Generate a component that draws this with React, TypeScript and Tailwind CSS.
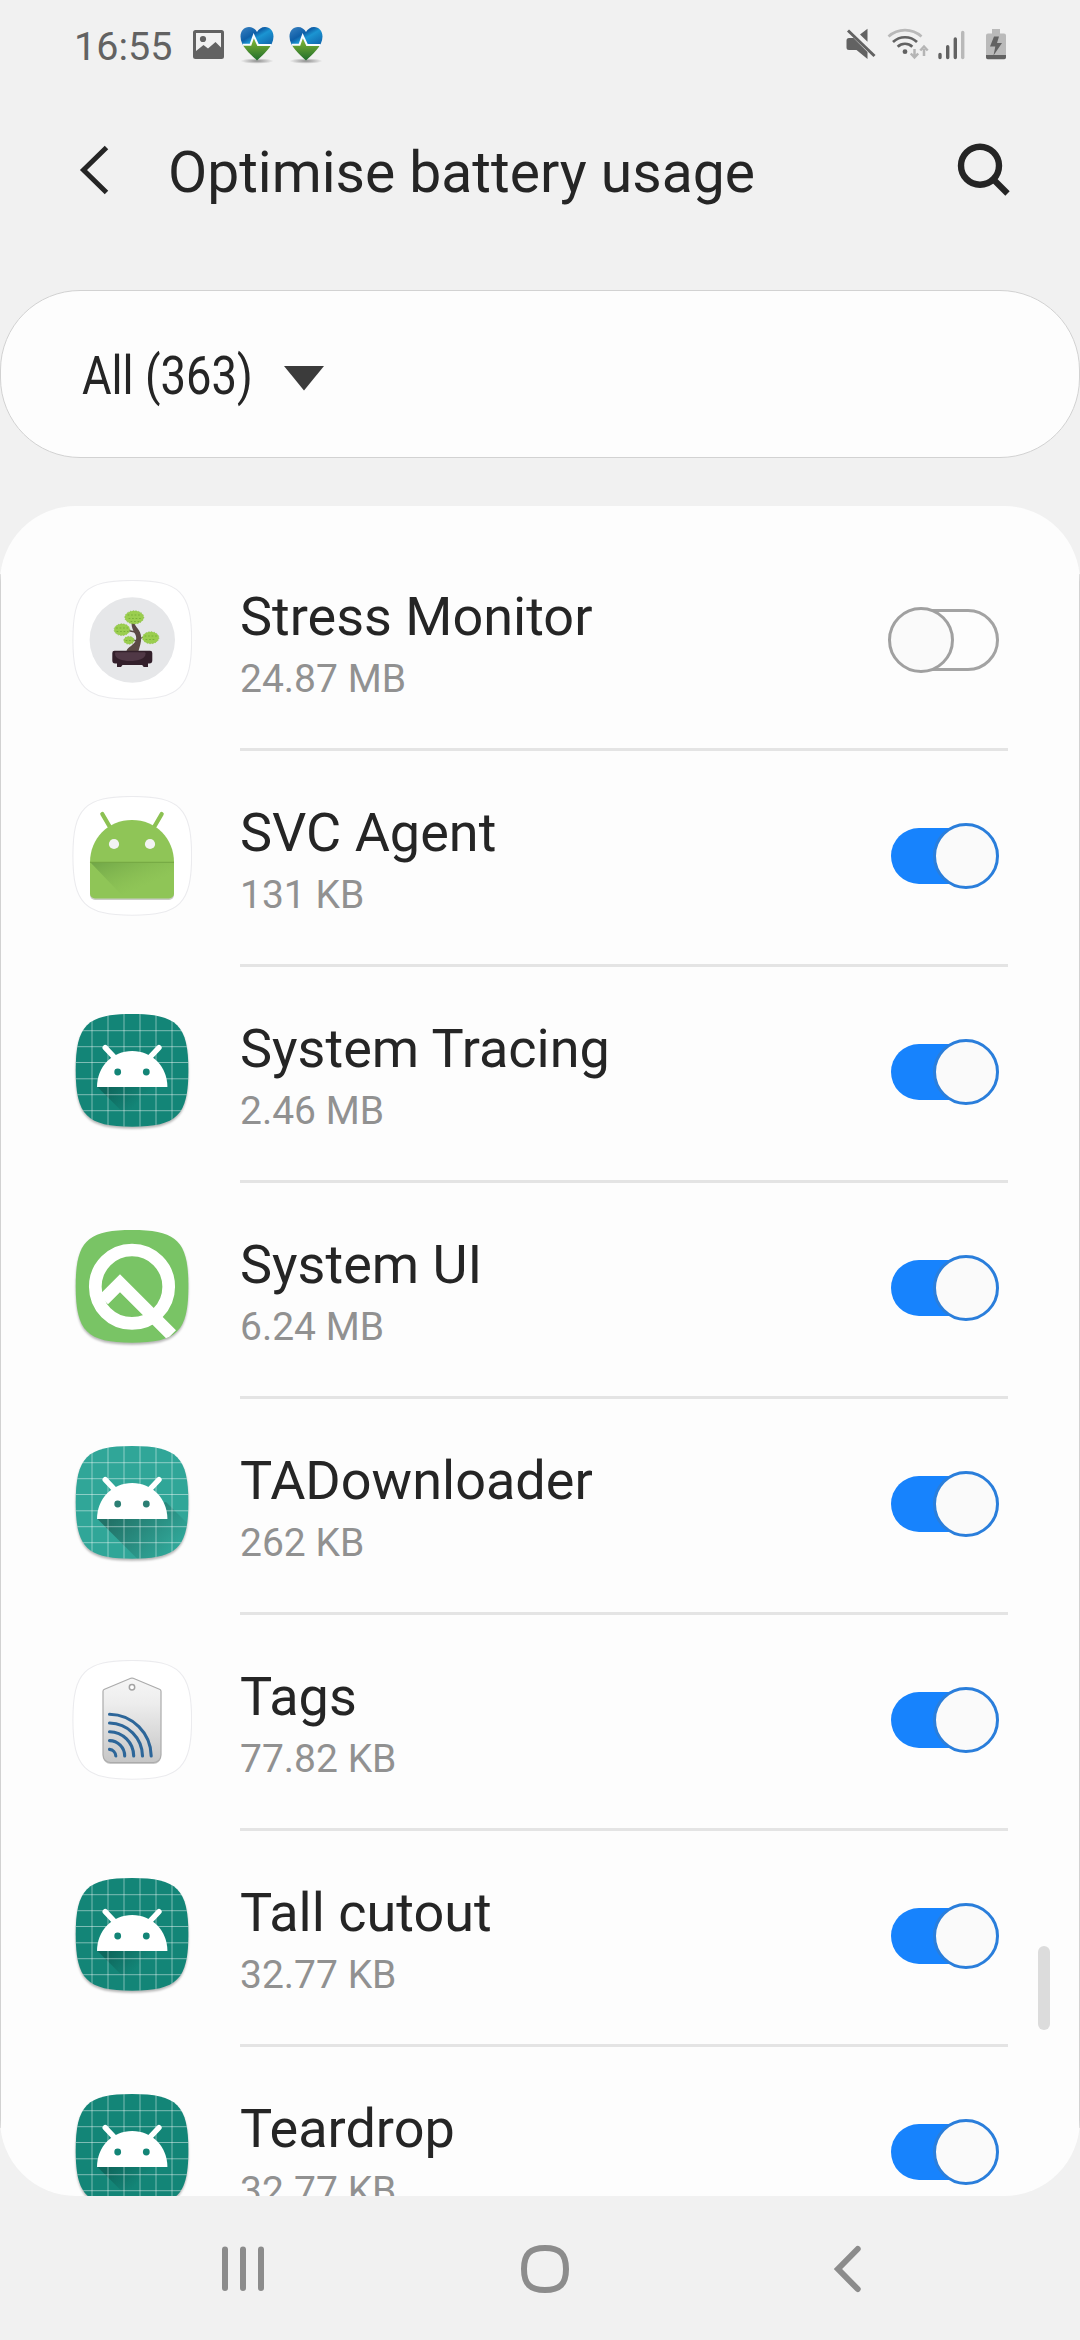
import type { ReactNode } from "react";

const SQUIRCLE = "M50 0C10 0 0 10 0 50 0 90 10 100 50 100 90 100 100 90 100 50 100 10 90 0 50 0Z";

function PlainTile({ children }: { children: ReactNode }) {
  return (
    <svg viewBox="0 0 120 120" className="size-[120px]">
      <path d={SQUIRCLE} transform="translate(.9 .5) scale(1.187)" fill="#fff" stroke="#ebebee" strokeWidth=".9" />
      {children}
    </svg>
  );
}

function StressIcon() {
  return (
    <PlainTile>
      <circle cx="60.3" cy="60" r="42.7" fill="#e6e7e9" />
      <path d="M59.5 43h3c.3 4 6.500 6.500 6.700 14.500.1 5-1.500 9-2.700 13.500H54.500c1-4 8-6 9.500-11 1.600-6-4.500-8-4.500-17z" fill="#5b4a45" />
      <path d="M56 50.500l7 1.500M71 57.500l-5 1.500M60 60l6 1" stroke="#5b4a45" strokeWidth="1.300" />
      <g fill="#9bce4f" stroke="#7fb83c" strokeWidth=".7" strokeDasharray="1.200 1.600">
        <ellipse cx="62.300" cy="37.300" rx="9.500" ry="6.600" />
        <ellipse cx="50" cy="49.700" rx="7.900" ry="5.900" />
        <ellipse cx="78.700" cy="57.700" rx="8.200" ry="6" />
        <ellipse cx="57" cy="60.300" rx="5.200" ry="3.900" />
      </g>
      <g fill="none" stroke="#74ad35" strokeWidth=".9" strokeDasharray=".9 2.600" strokeLinecap="round">
        <path d="M56 35h13M57 38.500h12M59 41.500h8M44.500 48h11M45 51.500h11M73 56h12M74 59.500h10M54 60.500h7" />
      </g>
      <path d="M42.500 70.700h35.500a2.300 2.300 0 0 1 2.300 2.300v7.500a3 3 0 0 1-3 3h-1.300V87h-4.300l-1.500-2H50.500L49 87h-4V83.500h-1.500a3 3 0 0 1-3.200-3V73a2.300 2.300 0 0 1 2.200-2.300z" fill="#33202b" />
      <path d="M43 73.500c0-.8.500-1.300 1.300-1.300H72c1 0 1.600.5 1.600 1.300C73.500 79 66 81 58 81s-15-2-15-7.500z" fill="#503846" />
    </PlainTile>
  );
}

function AgentIcon() {
  return (
    <PlainTile>
      <defs>
        <linearGradient id="agent-fold" x1="0" y1="0" x2="1" y2="1">
          <stop offset="0" stopColor="#5f9440" stopOpacity=".65" />
          <stop offset=".65" stopColor="#7cb14a" stopOpacity="0" />
        </linearGradient>
      </defs>
      <path d="M18 97.500V99a5 5 0 0 0 5 5h74a5 5 0 0 0 5-5v-1.500z" fill="#c9ccc6" />
      <path d="M30.300 18l7 12M89.700 18l-7 12" stroke="#8cc152" strokeWidth="4.200" strokeLinecap="round" />
      <path d="M18 66.300C18 42.500 36 24 60 24s42 18.500 42 42.300V97.500a5 5 0 0 1-5 5H23a5 5 0 0 1-5-5z" fill="#8fc557" />
      <path d="M18.500 66.500H102v34L97 102.500H53z" fill="url(#agent-fold)" />
      <path d="M18 66.300h84" stroke="#71a340" strokeWidth=".9" />
      <circle cx="42" cy="48" r="5.100" fill="#f3f3f3" />
      <circle cx="78" cy="48" r="5.100" fill="#f3f3f3" />
    </PlainTile>
  );
}

function RobotIcon({ id, light = false }: { id: string; light?: boolean }) {
  const base = light ? "#30a698" : "#138577";
  const dark = light ? "#1f695f" : "#0c5f55";
  return (
    <svg viewBox="0 0 120 120" className="size-[120px] drop-shadow-[0_2px_1px_rgba(0,0,0,0.28)]">
      <defs>
        <clipPath id={`${id}-clip`}>
          <path d={SQUIRCLE} transform="translate(3.700 2) scale(1.127)" />
        </clipPath>
        <linearGradient id={`${id}-cast`} gradientUnits="userSpaceOnUse" x1="45" y1="70" x2={light ? 90 : 66} y2={light ? 115 : 91}>
          <stop offset="0" stopColor={dark} stopOpacity={light ? 0.85 : 0.75} />
          <stop offset="1" stopColor={dark} stopOpacity="0" />
        </linearGradient>
      </defs>
      <g clipPath={`url(#${id}-clip)`}>
        <path d="M0 0h120v120H0z" fill={base} />
        <path d="M25.500 75L66 115.500h54V84L94 58z" fill={`url(#${id}-cast)`} />
        <path
          d="M20 0v120M36 0v120M52 0v120M68 0v120M84 0v120M100 0v120M0 18.700h120M0 34.700h120M0 50.500h120M0 66.800h120M0 82.700h120M0 98.700h120"
          stroke="#fff"
          strokeOpacity=".5"
          strokeWidth=".9"
        />
        <path d="M33.200 35.700l8.500 9M87 35.700l-8.500 9" stroke="#fff" strokeWidth="5.400" strokeLinecap="round" />
        <path d="M25 75C25 54.500 40.500 39 60.200 39s35.200 15.500 35.200 36z" fill="#fff" />
        <circle cx="45.700" cy="60" r="3.400" fill={light ? "#2c7f74" : base} />
        <circle cx="74.300" cy="60" r="3.400" fill={light ? "#2c7f74" : base} />
      </g>
    </svg>
  );
}

function QIcon() {
  return (
    <svg viewBox="0 0 120 120" className="size-[120px] drop-shadow-[0_2px_1px_rgba(0,0,0,0.28)]">
      <defs>
        <clipPath id="q-clip">
          <path d={SQUIRCLE} transform="translate(3.700 2) scale(1.127)" />
        </clipPath>
      </defs>
      <g clipPath="url(#q-clip)">
        <path d="M0 0h120v120H0z" fill="#79c465" />
        <g fill="none" stroke="#fff" strokeWidth="12.700">
          <circle cx="60" cy="58.700" r="36.700" />
          <path d="M31.500 71.800L48 55.300l51.500 51.500" />
        </g>
      </g>
    </svg>
  );
}

function TagsIcon() {
  return (
    <PlainTile>
      <defs>
        <linearGradient id="tag-face" x1="0" y1="0" x2="0" y2="1">
          <stop offset="0" stopColor="#f6f6f6" />
          <stop offset=".3" stopColor="#ededed" />
          <stop offset="1" stopColor="#c6c6c6" />
        </linearGradient>
      </defs>
      <path d="M31 95v2a7.500 7.500 0 0 0 7.500 7h43a7.500 7.500 0 0 0 7.500-7v-2z" fill="#c9c9c9" />
      <path
        d="M58.800 18.300L32.500 29.300c-1 .4-1.500 1-1.500 2V95a7.500 7.500 0 0 0 7.500 7.500h43A7.500 7.500 0 0 0 89 95V31.300c0-1-.5-1.600-1.500-2L61.200 18.300c-.8-.3-1.600-.3-2.400 0z"
        fill="url(#tag-face)"
        stroke="#ababab"
        strokeWidth="1.200"
      />
      <circle cx="60" cy="27.300" r="2.700" fill="#fff" stroke="#a3a3a3" strokeWidth="1.500" />
      <path
        d="M37.500 54.300A42.300 42.300 0 0 1 79.200 96M37.500 63A33.500 33.500 0 0 1 70.500 96M37.500 71.700A24.500 24.500 0 0 1 61.700 96M37.500 80.600A15.500 15.500 0 0 1 52.700 96M37.500 89.400A7 7 0 0 1 43.800 96"
        fill="none"
        stroke="#2d6699"
        strokeWidth="3.100"
        strokeLinecap="round"
      />
    </PlainTile>
  );
}

function Toggle({ on }: { on: boolean }) {
  return on ? (
    <div className="relative mt-[72px] h-[66px] w-[111px]">
      <div className="absolute top-[5px] left-[3px] h-14 w-[90px] rounded-full bg-[#1783fd]" />
      <div className="absolute top-0 right-0 size-[66px] rounded-full border-[3px] border-[#2a7edb] bg-[#fafafa]" />
    </div>
  ) : (
    <div className="relative mt-[72px] h-[66px] w-[111px]">
      <div className="absolute top-[2px] right-0 h-[62px] w-[100px] rounded-full border-[3px] border-[#a3a3a3]" />
      <div className="absolute top-0 left-0 size-[66px] rounded-full border-[3px] border-[#a0a0a0] bg-[#fafafa]" />
    </div>
  );
}

function HeartIcon({ id, className }: { id: string; className: string }) {
  return (
    <svg viewBox="0 0 34 38" className={className}>
      <defs>
        <linearGradient id={`${id}-blue`} x1="0" y1="0" x2="1" y2="1">
          <stop offset="0" stopColor="#3f86c4" />
          <stop offset=".4" stopColor="#0f5fa8" />
          <stop offset=".55" stopColor="#1b95d2" />
          <stop offset="1" stopColor="#0d5ca6" />
        </linearGradient>
        <linearGradient id={`${id}-green`} x1="0" y1="0" x2="0" y2="1">
          <stop offset="0" stopColor="#86ba35" />
          <stop offset="1" stopColor="#1d6b2c" />
        </linearGradient>
        <radialGradient id={`${id}-ground`}>
          <stop offset="0" stopColor="#8d8d8d" />
          <stop offset="1" stopColor="#8d8d8d" stopOpacity="0" />
        </radialGradient>
        <clipPath id={`${id}-heart`}>
          <path d="M17 34.500C11 28.500.5 20.500.5 10.500.5 5 4 1 9 1c3.500 0 6.500 2 8 5 1.500-3 4.500-5 8-5 5 0 8.500 4 8.500 9.500C33.500 20.500 23 28.500 17 34.500z" />
        </clipPath>
      </defs>
      <ellipse cx="17" cy="35" rx="16.500" ry="2.800" fill={`url(#${id}-ground)`} />
      <g clipPath={`url(#${id}-heart)`}>
        <path d="M0 0h34v20H0z" fill={`url(#${id}-blue)`} />
        <path d="M0 19h10l3.500-7 4 7H34v16H0z" fill={`url(#${id}-green)`} />
      </g>
      <path d="M3 18.700h7.500l3.200-9 4.300 9.300h13.500" fill="none" stroke="#f8fbff" strokeWidth="2" />
    </svg>
  );
}

function StatusBar() {
  return (
    <div className="flex h-[90px] items-start pl-[74px] text-[#626262]">
      <span className="mt-6 w-[119px] text-[39.500px] leading-[46px]">16:55</span>
      <svg viewBox="0 0 31 29" className="mt-[30px] h-[29px] w-[31px]">
        <path fillRule="evenodd" d="M2.500 0h26A2.500 2.500 0 0 1 31 2.500v24a2.500 2.500 0 0 1-2.500 2.500h-26A2.500 2.500 0 0 1 0 26.500v-24A2.500 2.500 0 0 1 2.500 0zM3 3v18l7.500-6 4.500 3.500 7.500-6.500 5.500 5.500V3z" fill="#626262" />
        <circle cx="10" cy="9" r="3.100" fill="#626262" />
      </svg>
      <HeartIcon id="h1" className="mt-[26px] ml-[16px] h-[38px] w-[34px]" />
      <HeartIcon id="h2" className="mt-[26px] ml-[15px] h-[38px] w-[34px]" />
      <svg viewBox="0 0 30 32" className="mt-7 ml-[523px] h-8 w-[30px]">
        <path d="M.5 12.500A2.500 2.500 0 0 1 3 10h4.500l14 14v7L10.500 22H3a2.500 2.500 0 0 1-2.500-2.500zM14 6.500L21.500.7v13z" fill="#626262" />
        <path d="M2 2.500L28.500 28" stroke="#626262" strokeWidth="3" />
      </svg>
      <svg viewBox="0 0 44 34" className="mt-7 ml-[11px] h-[34px] w-11" fill="none">
        <path d="M1.500 8.500A24.500 24.500 0 0 1 34.500 8.500" stroke="#b9b9b9" strokeWidth="2.700" />
        <path d="M6 14A17.500 17.500 0 0 1 30 14M10.700 18.700A10.500 10.500 0 0 1 25.300 18.700" stroke="#626262" strokeWidth="2.700" />
        <circle cx="18" cy="23.700" r="2.400" fill="#626262" />
        <path d="M27.500 21v7M23.800 25.500l3.700 4 3.700-4M37 28v-7M33.300 22.500l3.700-4 3.700 4" stroke="#b5b5b5" strokeWidth="2.500" />
      </svg>
      <svg viewBox="0 0 30 32" className="mt-7 ml-[7px] h-8 w-[30px]" strokeWidth="3.400" strokeLinecap="round">
        <path d="M2 26.500v3M9.700 18.700v10.800M17.300 11v18.500" stroke="#626262" />
        <path d="M24.700 4.500v25" stroke="#b9b9b9" />
      </svg>
      <svg viewBox="0 0 20 31" className="mt-[28px] ml-[18px] h-[32px] w-5">
        <path d="M6 .5h8V5h4a2 2 0 0 1 2 2v20H0V7a2 2 0 0 1 2-2h4z" fill="#bababa" />
        <path d="M0 26.500h20v2.500a1.700 1.700 0 0 1-1.700 1.700H1.700A1.700 1.700 0 0 1 0 29z" fill="#626262" />
        <path d="M8 8h5l-2 6.500h5L7.500 27l1.800-9H4z" fill="#626262" />
      </svg>
    </div>
  );
}

function Header() {
  return (
    <header className="flex h-[200px] items-start pl-[78px] text-[#252525]">
      <svg viewBox="0 0 32 52" className="mt-[54px] h-[52px] w-8" fill="none">
        <path d="M28.500 3.500L5.500 26l23 22.500" stroke="#252525" strokeWidth="5" />
      </svg>
      <h1 className="mt-12 ml-[58px] w-[787px] text-[57px] leading-[70px]">Optimise battery usage</h1>
      <svg viewBox="0 0 56 56" className="mt-[51px] size-14" fill="none">
        <circle cx="25" cy="24.700" r="19" stroke="#252525" strokeWidth="6.400" />
        <path d="M38.500 38.500L52.500 52.500" stroke="#252525" strokeWidth="6.200" />
      </svg>
    </header>
  );
}

const apps: { name: string; size: string; icon: ReactNode; on: boolean }[] = [
  { name: "Stress Monitor", size: "24.87 MB", icon: <StressIcon />, on: false },
  { name: "SVC Agent", size: "131 KB", icon: <AgentIcon />, on: true },
  { name: "System Tracing", size: "2.46 MB", icon: <RobotIcon id="tracing" />, on: true },
  { name: "System UI", size: "6.24 MB", icon: <QIcon />, on: true },
  { name: "TADownloader", size: "262 KB", icon: <RobotIcon id="tad" light />, on: true },
  { name: "Tags", size: "77.82 KB", icon: <TagsIcon />, on: true },
  { name: "Tall cutout", size: "32.77 KB", icon: <RobotIcon id="tall" />, on: true },
  { name: "Teardrop", size: "32.77 KB", icon: <RobotIcon id="teardrop" />, on: true },
];

export default function App() {
  return (
    <div className="flex h-[2340px] w-[1080px] flex-col overflow-hidden bg-[#f1f1f1] font-['Roboto',sans-serif]">
      <StatusBar />
      <Header />
      <div className="flex h-[168px] shrink-0 items-start rounded-[80px] border border-[#d2d2d2] bg-[#fdfdfd] pl-[81px]">
        <div className="mt-[50px] w-[202px]">
          <span className="block w-max origin-left scale-x-[0.84] text-[54px] leading-[70px] text-[#252525]">All (363)</span>
        </div>
        <svg viewBox="0 0 40 25" className="mt-[75px] h-[25px] w-10">
          <path d="M0 0h40L20 24.500z" fill="#3b3b3b" />
        </svg>
      </div>
      <main className="relative mt-12 h-[1690px] shrink-0 overflow-hidden rounded-[76px] bg-[#fdfdfd] pt-[29px]">
        {apps.map((app) => (
          <div key={app.name} className="flex h-[216px] items-start pl-[72px]">
            <div className="mt-[45px] mr-12">{app.icon}</div>
            <div className="flex h-[216px] w-[768px] items-start justify-between border-b-[3px] border-[#e4e4e4] pr-[9px]">
              <div className="pt-[50px]">
                <div className="text-[54px] leading-[64px] text-[#252525]">{app.name}</div>
                <div className="mt-[6px] text-[39px] leading-[48px] text-[#919191]">{app.size}</div>
              </div>
              <Toggle on={app.on} />
            </div>
          </div>
        ))}
        <div className="absolute top-[68px] bottom-[68px] left-0 w-px bg-[#d2d2d2]" />
        <div className="absolute top-[68px] right-0 bottom-[68px] w-px bg-[#d2d2d2]" />
        <div className="absolute top-[1440px] right-[30px] h-[84px] w-3 rounded-full bg-[#dcdcdc]" />
      </main>
      <nav className="flex h-[144px] items-start pt-[47px] pl-[219px]">
        <svg viewBox="0 0 48 52" className="h-[52px] w-12" stroke="#8c8c8c" strokeWidth="6" strokeLinecap="round">
          <path d="M6 6.500v38.500M24 6.500v38.500M42 6.500v38.500" />
        </svg>
        <svg viewBox="0 0 52 52" className="ml-[252px] size-[52px]" fill="none">
          <path d="M26 5C11 5 5 11 5 26s6 21 21 21 21-6 21-21S41 5 26 5z" stroke="#8c8c8c" strokeWidth="6" />
        </svg>
        <svg viewBox="0 0 32 52" className="ml-[260px] h-[52px] w-8" fill="none" stroke="#8c8c8c" strokeWidth="6" strokeLinecap="round">
          <path d="M26.700 6L7 26l19.700 20" />
        </svg>
      </nav>
    </div>
  );
}
